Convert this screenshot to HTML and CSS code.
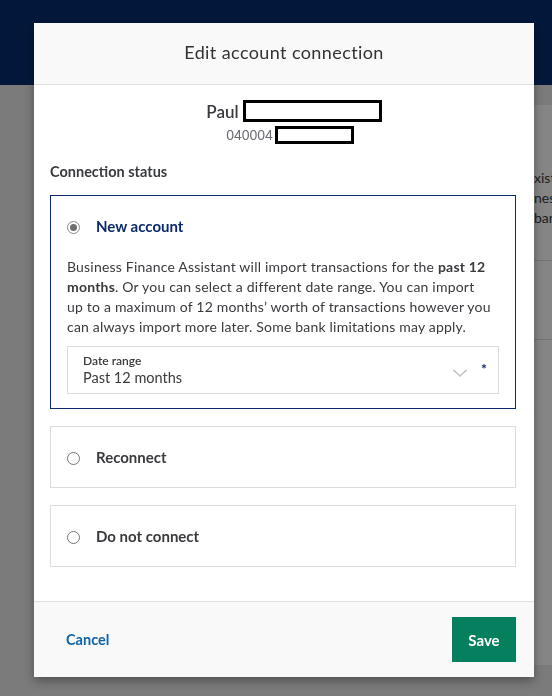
FILE: index.html
```html
<!DOCTYPE html>
<html lang="en">
<head>
    <meta charset="UTF-8">
    <meta name="viewport" content="width=device-width, initial-scale=1.0">
    <title>Edit account connection</title>
    <link rel="stylesheet" href="styles.css">
</head>
<body>
    <div class="app">
        <header class="topbar"></header>
        <main class="page">
            <section class="panel">
                <p class="panel-text">xisting<br>nesses<br>bank</p>
                <div class="panel-row"></div>
                <div class="panel-row"></div>
            </section>
        </main>
    </div>

    <div class="overlay"></div>

    <div class="modal">
        <div class="modal-header">Edit account connection</div>

        <div class="modal-body">
            <div class="account">
                <div class="account-name">Paul <span class="redact redact-name"></span></div>
                <div class="account-number">040004<span class="redact redact-number"></span></div>
            </div>

            <h3 class="section-title">Connection status</h3>

            <div class="option selected">
                <label class="option-head">
                    <span class="radio checked"></span>
                    <span class="option-label">New account</span>
                </label>
                <p class="option-text">Business Finance Assistant will import transactions for the <b>past 12 months</b>. Or you can select a different date range. You can import up to a maximum of 12 months’ worth of transactions however you can always import more later. Some bank limitations may apply.</p>
                <div class="select">
                    <div class="select-value">
                        <span class="select-label">Date range</span>
                        <span class="select-text">Past 12 months</span>
                    </div>
                    <svg class="chevron" width="16" height="10" viewBox="0 0 16 10">
                        <path d="M1.5 2 L8 8 L14.5 2" fill="none" stroke="#c4c4c4" stroke-width="1.6"/>
                    </svg>
                    <span class="required">*</span>
                </div>
            </div>

            <div class="option">
                <label class="option-head">
                    <span class="radio"></span>
                    <span class="option-label">Reconnect</span>
                </label>
            </div>

            <div class="option">
                <label class="option-head">
                    <span class="radio"></span>
                    <span class="option-label">Do not connect</span>
                </label>
            </div>
        </div>

        <div class="modal-footer">
            <a class="cancel" href="#">Cancel</a>
            <button class="save">Save</button>
        </div>
    </div>
</body>
</html>
```

FILE: styles.css
```css
body {
    margin: 0;
    font-family: Lato, "Open Sans", sans-serif;
    color: #393a3d;
    background: #ececec;
    overflow: hidden;
}
.app {
    height: 696px;
}
.topbar {
    height: 85px;
    background: #072d70;
}
.page {
    display: flex;
    justify-content: flex-end;
    padding-top: 20px;
}
.panel {
    width: 18px;
    height: 560px;
    background: #fff;
    overflow: hidden;
    white-space: nowrap;
}
.panel-text {
    margin: 63px 0 0;
    font-size: 14px;
    line-height: 20px;
}
.panel-row {
    height: 78px;
    border-top: 1px solid #ddd;
}
.panel-text + .panel-row {
    margin-top: 32px;
}
.overlay {
    position: fixed;
    inset: 0;
    background: rgba(0, 0, 0, 0.48);
}

.modal {
    position: fixed;
    top: 23px;
    left: 34px;
    width: 500px;
    background: #fff;
    box-shadow: 0 4px 10px rgba(0, 0, 0, 0.35);
}
.modal-header {
    height: 61px;
    line-height: 58px;
    text-align: center;
    font-size: 18px;
    letter-spacing: 0.4px;
    color: #333;
    background: #f9f9f9;
    border-bottom: 1px solid #e0e0e0;
}
.modal-body {
    padding: 15px 18px 34px 16px;
}
.account {
    text-align: center;
}
.account-name {
    display: flex;
    justify-content: center;
    align-items: center;
    gap: 4px;
    margin-left: 22px;
    font-size: 17px;
    font-weight: 600;
    height: 22px;
}
.account-number {
    display: flex;
    justify-content: center;
    align-items: center;
    gap: 2px;
    margin-left: 14px;
    margin-top: 4px;
    font-family: "Liberation Sans", Arial, sans-serif;
    font-size: 14px;
    color: #6b6c72;
    height: 18px;
}
.redact {
    display: inline-block;
    box-sizing: border-box;
    border: 3px solid #000;
    background: #fff;
}
.redact-name {
    width: 139px;
    height: 22px;
}
.redact-number {
    width: 79px;
    height: 18px;
}
.section-title {
    margin: 18px 0 13px;
    font-size: 14.5px;
    font-weight: 700;
    line-height: 20px;
}

.option {
    border: 1px solid #dcdcdc;
    padding: 19px 16px;
    margin-top: 17px;
}
.option.selected {
    border-color: #0b2a69;
    margin-top: 0;
    padding-bottom: 14px;
}
.option-head {
    display: flex;
    align-items: center;
    gap: 16px;
    height: 22px;
}
.radio {
    box-sizing: border-box;
    width: 13px;
    height: 13px;
    border: 1px solid #767676;
    border-radius: 50%;
    background: #fff;
    position: relative;
    top: 1px;
}
.radio.checked {
    border-color: #8a8a8a;
}
.radio.checked::after {
    content: "";
    position: absolute;
    left: 2px;
    top: 2px;
    width: 7px;
    height: 7px;
    border-radius: 50%;
    background: #6f6f6f;
}
.option-label {
    font-size: 15px;
    font-weight: 700;
}
.selected .option-label {
    color: #0b2a69;
}
.option-text {
    margin: 20px 8px 9px 0;
    font-size: 14px;
    letter-spacing: 0.2px;
    line-height: 20px;
}
.option-text b {
    font-weight: 700;
}
.select {
    display: flex;
    align-items: center;
    height: 46px;
    border: 1px solid #dcdcdc;
    padding: 0 11px 0 15px;
}
.select-value {
    flex: 1;
    display: flex;
    flex-direction: column;
}
.select-label {
    font-size: 12px;
    font-weight: 600;
    line-height: 15px;
}
.select-text {
    font-size: 14.5px;
    line-height: 20px;
}
.chevron {
    margin: 6px 13px 0 0;
}
.required {
    color: #0b2a69;
    font-weight: 700;
    font-size: 14px;
    margin-top: -4px;
}

.modal-footer {
    display: flex;
    justify-content: space-between;
    align-items: center;
    background: #f9f9f9;
    border-top: 1px solid #e0e0e0;
    padding: 15px 18px 15px 32px;
}
.cancel {
    color: #0d63a8;
    font-weight: 700;
    font-size: 14.5px;
    text-decoration: none;
}
.save {
    width: 64px;
    height: 45px;
    border: none;
    background: #04805e;
    color: #fff;
    font-family: inherit;
    font-weight: 700;
    font-size: 15px;
}
```
